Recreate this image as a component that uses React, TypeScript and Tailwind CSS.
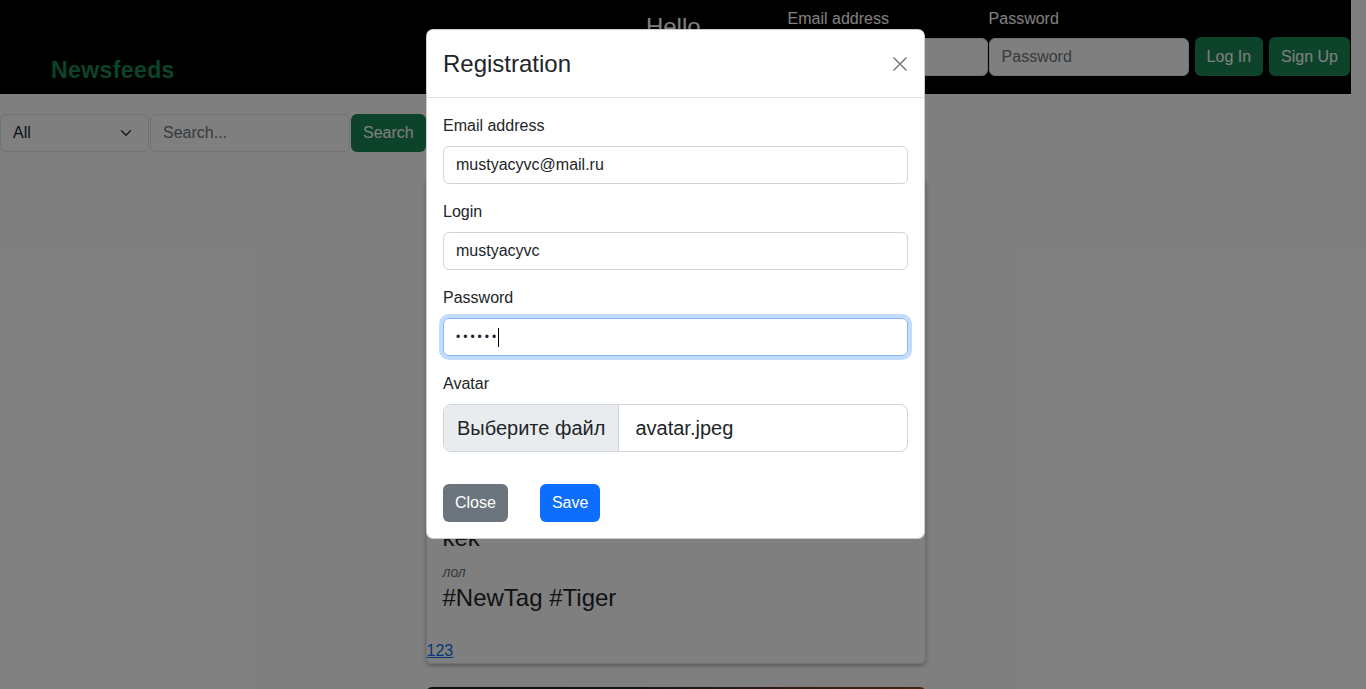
import React from "react";

const font = { fontFamily: '"Liberation Sans", Arial, sans-serif' };

function CloseIcon() {
  return (
    <svg width="16" height="16" viewBox="0 0 16 16" className="block">
      <path d="M1.5 1.5 L14.5 14.5 M14.5 1.5 L1.5 14.5" stroke="#000" strokeOpacity="0.5" strokeWidth="1.6" fill="none" />
    </svg>
  );
}

function Chevron() {
  return (
    <svg width="12" height="12" viewBox="0 0 16 16" className="block">
      <path d="M2 5 L8 11 L14 5" stroke="#343a40" strokeWidth="2" fill="none" strokeLinecap="round" strokeLinejoin="round" />
    </svg>
  );
}

export default function App() {
  return (
    <div className="relative w-[1366px] h-[689px] overflow-hidden bg-white text-[#212529]" style={font}>
      {/* page */}
      <div className="w-[1351px]">
        <header className="h-[94px] bg-black flex items-end">
          <div className="ml-[51px] mb-[10px] text-[23px] leading-[28px] tracking-[0.4px] font-bold text-[#198754]">Newsfeeds</div>
          <div className="ml-auto flex items-end pb-[18px] pr-[1px] h-full">
            <div className="self-start mt-[13px] mr-[87px] text-[24px] leading-[28px] text-white font-light">Hello</div>
            <div className="w-[200px] flex flex-col">
              <label className="text-[16px] leading-6 mb-[7px] text-white">Email address</label>
              <div className="h-[38px] bg-white border border-[#dee2e6] rounded-[6px] px-3 flex items-center text-[16px] text-[#6c757d]">Email</div>
            </div>
            <div className="w-[200px] ml-[1px] flex flex-col">
              <label className="text-[16px] leading-6 mb-[7px] text-white">Password</label>
              <div className="h-[38px] bg-white border border-[#dee2e6] rounded-[6px] px-3 flex items-center text-[16px] text-[#6c757d]">Password</div>
            </div>
            <button className="ml-[6px] h-[39px] px-3 rounded-[6px] bg-[#198754] text-white text-[16px]">Log In</button>
            <button className="ml-[6px] h-[39px] px-3 rounded-[6px] bg-[#198754] text-white text-[16px]">Sign Up</button>
          </div>
        </header>

        <div className="mt-[20px] flex">
          <div className="w-[149px] h-[38px] border border-[#dee2e6] rounded-[6px] pl-[12px] pr-[16px] flex items-center justify-between text-[16px]">
            <span>All</span>
            <Chevron />
          </div>
          <div className="ml-[1px] w-[200px] h-[38px] border border-[#dee2e6] rounded-[6px] px-3 flex items-center text-[16px] text-[#6c757d]">Search...</div>
          <button className="ml-[1px] h-[38px] px-3 rounded-[6px] bg-[#198754] text-white text-[16px]">Search</button>
        </div>

        <div className="mx-auto w-[500px] mt-[26px]">
          <div className="border border-[#dee2e6] rounded-[6px] shadow-[0_2px_4px_rgba(0,0,0,0.3)] overflow-hidden">
            <div className="h-[277px] bg-gradient-to-r from-[#2a221c] via-[#4a3322] to-[#2a1f18]" />
            <div className="mt-[13px] h-[37px] bg-gradient-to-r from-[#2b2019] to-[#3d2a1d]" />
            <div className="px-4 pt-[14px]">
              <div className="text-[24px] leading-[36px]">kek</div>
              <div className="mt-[6px] text-[14px] leading-[20px] italic text-[#6c757d]">лол</div>
              <div className="text-[24px] leading-[32px]">#NewTag #Tiger</div>
            </div>
            <div className="mt-[25px] text-[16px] leading-6 text-[#0d6efd] underline">123</div>
          </div>
          <div className="mt-[23px] h-[200px] rounded-[6px] bg-gradient-to-r from-[#222] via-[#2a2a2a] via-40% to-[#8a4a22]" />
        </div>
      </div>

      {/* backdrop */}
      <div className="absolute inset-0 bg-black/50" />

      {/* modal */}
      <div className="absolute top-0 left-0 w-[1351px] flex justify-center pt-[29px]">
        <div className="w-[499px] bg-white rounded-[7px] border border-black/20">
          <div className="h-[68px] px-4 flex items-center justify-between border-b border-[#dee2e6]">
            <div className="text-[24px] leading-[36px] font-medium">Registration</div>
            <CloseIcon />
          </div>
          <div className="p-4">
            <label className="block text-[16px] leading-6 mb-2">Email address</label>
            <div className="h-[38px] border border-[#ced4da] rounded-[6px] px-3 flex items-center text-[16px] mb-4">mustyacyvc@mail.ru</div>
            <label className="block text-[16px] leading-6 mb-2">Login</label>
            <div className="h-[38px] border border-[#ced4da] rounded-[6px] px-3 flex items-center text-[16px] mb-4">mustyacyvc</div>
            <label className="block text-[16px] leading-6 mb-2">Password</label>
            <div className="h-[38px] border border-[#86b7fe] rounded-[6px] px-3 flex items-center text-[16px] mb-4 shadow-[0_0_0_4px_rgba(13,110,253,0.25)]">
              <span className="text-[12px] tracking-[3px]">••••••</span>
              <span className="w-[1px] h-[19px] bg-black -ml-[1px]" />
            </div>
            <label className="block text-[16px] leading-6 mb-2">Avatar</label>
            <div className="h-[48px] border border-[#ced4da] rounded-[8px] flex items-stretch text-[20px] overflow-hidden">
              <div className="bg-[#e9ecef] px-[13px] flex items-center border-r border-[#ced4da]">Выберите файл</div>
              <div className="pl-4 flex items-center">avatar.jpeg</div>
            </div>
            <div className="mt-8 flex">
              <button className="h-[38px] px-3 rounded-[6px] bg-[#6c757d] text-white text-[16px]">Close</button>
              <button className="ml-8 h-[38px] px-3 rounded-[6px] bg-[#0d6efd] text-white text-[16px]">Save</button>
            </div>
          </div>
        </div>
      </div>
    </div>
  );
}
